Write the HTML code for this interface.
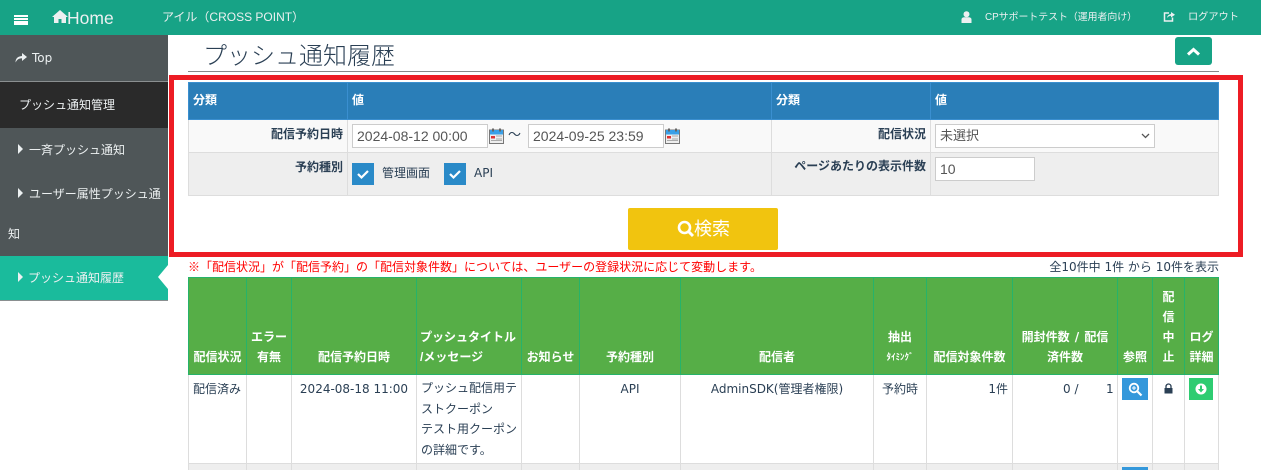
<!DOCTYPE html>
<html lang="ja"><head><meta charset="utf-8"><title>プッシュ通知履歴</title>
<style>
html,body{margin:0;padding:0;background:#fff;width:1261px;height:470px;overflow:hidden}
body{font-family:"Liberation Sans","Noto Sans CJK JP",sans-serif;font-size:12px;color:#2A3F54;position:relative}
.a{position:absolute;white-space:nowrap;line-height:16px}
.b{position:absolute}
.w{color:#fff}
.s{color:#ECF0F1}
.h{color:#fff;font-weight:bold}
.c{text-align:center}
.r{text-align:right}
.d{font-family:"DejaVu Sans","Noto Sans CJK JP",sans-serif}
.inp{position:absolute;box-sizing:border-box;background:#fff;border:1px solid #ccc;color:#555;font-size:14px;line-height:22px;padding-left:4px;height:24px;white-space:nowrap}
.chk{position:absolute;width:22px;height:22px;background:#2a8ac8}
</style></head><body>

<!-- top bar -->
<div class="b" style="left:0;top:0;width:1261px;height:35px;background:#17a386"></div>
<div class="b" style="left:14px;top:15px;width:14px;height:2px;background:#fff;box-shadow:0 3px 0 #fff,0 6px 0 #fff,0 8px 0 #fff"></div>
<svg class="b" style="left:52px;top:10px" width="16" height="13" viewBox="0 0 16 13"><path d="M8 0 L16 7 L14 7 L14 13 L9.500 13 L9.500 9 L6.500 9 L6.500 13 L2 13 L2 7 L0 7 Z" fill="#ecf0f1"/></svg>
<div class="a s" style="left:67px;top:7px;font-size:17.500px;line-height:22px">Home</div>
<div class="a s" style="left:162px;top:9px;font-size:12px">アイル（CROSS POINT）</div>
<svg class="b" style="left:961px;top:11px" width="11" height="12" viewBox="0 0 11 12"><circle cx="5.500" cy="3.200" r="3" fill="#ecf0f1"/><path d="M0.500 12 V8.500 Q0.500 6.500 3 6.200 H8 Q10.500 6.500 10.500 8.500 V12 Z" fill="#ecf0f1"/></svg>
<div class="a s" style="left:985px;top:10px;font-size:9.900px">CPサポートテスト（運用者向け）</div>
<svg class="b" style="left:1163px;top:11px" width="12" height="11" viewBox="0 0 12 11"><path d="M6 2 H1.500 V10 H9.500 V6.500" fill="none" stroke="#ecf0f1" stroke-width="1.500"/><path d="M4 7 Q4.500 3.500 8 3 V1 L12 3.800 L8 6.500 V4.800 Q5.500 5 4 7Z" fill="#ecf0f1"/></svg>
<div class="a s" style="left:1188px;top:10px;font-size:10.200px">ログアウト</div>

<!-- sidebar -->
<div class="b" style="left:0;top:35px;width:168px;height:221px;background:#4f5658"></div>
<div class="b" style="left:0;top:81px;width:168px;height:1px;background:#8a8f90"></div>
<div class="b" style="left:0;top:82px;width:168px;height:46px;background:#2a2a2a"></div>
<div class="b" style="left:0;top:256px;width:168px;height:44px;background:#1abb9c"></div>
<div class="b" style="left:0;top:300px;width:168px;height:1px;background:#8a8f90"></div>
<div class="b" style="left:158px;top:265px;width:0;height:0;border-top:12.500px solid transparent;border-bottom:12.500px solid transparent;border-right:10px solid #fff"></div>
<svg class="b" style="left:15px;top:52px" width="12" height="11" viewBox="0 0 12 11"><path d="M0.500 10.500 Q0.500 4.500 7 4 V1 L12 5 L7 9 V6.300 Q2.500 6.300 0.500 10.500Z" fill="#ecf0f1"/></svg>
<div class="a s d" style="left:32px;top:50px">Top</div>
<div class="a s" style="left:19px;top:97px">プッシュ通知管理</div>
<div class="b" style="left:18px;top:144px;width:0;height:0;border-top:5px solid transparent;border-bottom:5px solid transparent;border-left:5px solid #ecf0f1"></div>
<div class="a s" style="left:29px;top:142px">一斉プッシュ通知</div>
<div class="b" style="left:18px;top:188px;width:0;height:0;border-top:5px solid transparent;border-bottom:5px solid transparent;border-left:5px solid #ecf0f1"></div>
<div class="a s" style="left:29px;top:186px">ユーザー属性プッシュ通</div>
<div class="a s" style="left:8px;top:226px">知</div>
<div class="b" style="left:18px;top:272px;width:0;height:0;border-top:5px solid transparent;border-bottom:5px solid transparent;border-left:5px solid #ecf0f1"></div>
<div class="a s" style="left:28px;top:270px">プッシュ通知履歴</div>

<!-- title -->
<div class="a" style="left:203px;top:42px;font-size:24px;line-height:30px;color:#2A3F54;font-weight:300">プッシュ通知履歴</div>
<div class="b" style="left:188px;top:71px;width:1031px;height:1px;background:#888"></div>
<div class="b" style="left:1175px;top:37px;width:37px;height:28px;background:#17a386;border-radius:3px"></div>
<svg class="b" style="left:1186px;top:47px" width="15" height="9" viewBox="0 0 15 9"><path d="M2 7.500 L7.500 2.500 L13 7.500" fill="none" stroke="#fff" stroke-width="3"/></svg>

<!-- search table -->
<div class="b" style="left:188px;top:82px;width:1031px;height:38px;background:#2a7eb8;border:solid #3a8fd0;border-width:1px 0 1px 0;box-sizing:border-box"></div>
<div class="b" style="left:188px;top:120px;width:1031px;height:33px;background:#f9f9f9"></div>
<div class="b" style="left:188px;top:153px;width:1031px;height:43px;background:#eee"></div>
<div class="b" style="left:188px;top:152px;width:1031px;height:1px;background:#ddd"></div>
<div class="b" style="left:188px;top:195px;width:1031px;height:1px;background:#ddd"></div>
<div class="b" style="left:188px;top:120px;width:1px;height:76px;background:#ddd"></div>
<div class="b" style="left:1218px;top:120px;width:1px;height:76px;background:#ddd"></div>
<div class="b" style="left:188px;top:82px;width:1px;height:38px;background:#3a8fd0"></div>
<div class="b" style="left:1218px;top:82px;width:1px;height:38px;background:#3a8fd0"></div>
<div class="b" style="left:347px;top:82px;width:1px;height:38px;background:#3a8fd0"></div>
<div class="b" style="left:771px;top:82px;width:1px;height:38px;background:#3a8fd0"></div>
<div class="b" style="left:930px;top:82px;width:1px;height:38px;background:#3a8fd0"></div>
<div class="b" style="left:347px;top:120px;width:1px;height:76px;background:#ddd"></div>
<div class="b" style="left:771px;top:120px;width:1px;height:76px;background:#ddd"></div>
<div class="b" style="left:930px;top:120px;width:1px;height:76px;background:#ddd"></div>
<div class="a h" style="left:193px;top:92px">分類</div>
<div class="a h" style="left:352px;top:92px">値</div>
<div class="a h" style="left:776px;top:92px">分類</div>
<div class="a h" style="left:935px;top:92px">値</div>
<div class="a r" style="left:188px;width:155px;top:126px;font-weight:bold">配信予約日時</div>
<div class="a r" style="left:188px;width:155px;top:159px;font-weight:bold">予約種別</div>
<div class="a r" style="left:772px;width:154px;top:126px;font-weight:bold">配信状況</div>
<div class="a r" style="left:772px;width:154px;top:158px;font-weight:bold">ページあたりの表示件数</div>
<div class="inp" style="left:352px;top:124px;width:136px">2024-08-12 00:00</div>
<div class="inp" style="left:528px;top:124px;width:136px">2024-09-25 23:59</div>
<svg class="b" style="left:489px;top:128px" width="15" height="16" viewBox="0 0 15 16"><rect x="0.500" y="2" width="14" height="13.500" fill="#eee" stroke="#777"/><rect x="1" y="2" width="13" height="4.500" fill="#3aa0e8"/><rect x="3" y="0.500" width="2" height="3" fill="#666"/><rect x="10" y="0.500" width="2" height="3" fill="#666"/><rect x="2" y="8" width="4" height="2.500" fill="#d33"/><path d="M7 8h6M7 11h6M2 12.500h11" stroke="#aaa"/></svg>
<div class="a" style="left:508px;top:127px;font-size:13px">〜</div>
<svg class="b" style="left:665px;top:128px" width="15" height="16" viewBox="0 0 15 16"><rect x="0.500" y="2" width="14" height="13.500" fill="#eee" stroke="#777"/><rect x="1" y="2" width="13" height="4.500" fill="#3aa0e8"/><rect x="3" y="0.500" width="2" height="3" fill="#666"/><rect x="10" y="0.500" width="2" height="3" fill="#666"/><rect x="2" y="8" width="4" height="2.500" fill="#d33"/><path d="M7 8h6M7 11h6M2 12.500h11" stroke="#aaa"/></svg>
<div class="inp" style="left:935px;top:124px;width:220px;font-size:13px">未選択</div>
<svg class="b" style="left:1141px;top:133px" width="9" height="6" viewBox="0 0 9 6"><path d="M1 1 L4.500 4.500 L8 1" fill="none" stroke="#555" stroke-width="1.300"/></svg>
<div class="inp" style="left:935px;top:157px;width:100px">10</div>
<div class="chk" style="left:352px;top:163px"></div>
<svg class="b" style="left:352px;top:163px" width="22" height="22" viewBox="0 0 22 22"><path d="M6 11 L9.500 14.500 L16 8" fill="none" stroke="#fff" stroke-width="2.200"/></svg>
<div class="a" style="left:382px;top:165px">管理画面</div>
<div class="chk" style="left:444px;top:163px"></div>
<svg class="b" style="left:444px;top:163px" width="22" height="22" viewBox="0 0 22 22"><path d="M6 11 L9.500 14.500 L16 8" fill="none" stroke="#fff" stroke-width="2.200"/></svg>
<div class="a d" style="left:474px;top:165px">API</div>

<!-- search button -->
<div class="b" style="left:628px;top:208px;width:150px;height:42px;background:#f1c40f;border-radius:2px"></div>
<svg class="b" style="left:677px;top:220px" width="18" height="18" viewBox="0 0 18 18"><circle cx="7.500" cy="7.500" r="5.500" fill="none" stroke="#fff" stroke-width="2.600"/><path d="M11.500 11.500 L16 16" stroke="#fff" stroke-width="3"/></svg>
<div class="a w" style="left:694px;top:218px;font-size:18px;line-height:22px">検索</div>

<!-- red highlight box -->
<div class="b" style="left:169px;top:75px;width:1074px;height:182px;border:5px solid #ed1c24;box-sizing:border-box"></div>

<!-- notes -->
<div class="a" style="left:188px;top:259px;color:#f00">※「配信状況」が「配信予約」の「配信対象件数」については、ユーザーの登録状況に応じて変動します。</div>
<div class="a r d" style="left:919px;width:300px;top:259px">全10件中 1件 から 10件を表示</div>

<!-- results table -->
<div class="b" style="left:188px;top:277px;width:1031px;height:98px;background:#56ae47;border:solid #26b36a;border-width:1px 0 1px 0;box-sizing:border-box"></div>
<div class="b" style="left:188px;top:464px;width:1031px;height:6px;background:#eee"></div>
<div class="b" style="left:188px;top:463px;width:1031px;height:1px;background:#ddd"></div>
<div class="b" style="left:188px;top:277px;width:1px;height:98px;background:#26b36a"></div>
<div class="b" style="left:246px;top:277px;width:1px;height:98px;background:#26b36a"></div>
<div class="b" style="left:291px;top:277px;width:1px;height:98px;background:#26b36a"></div>
<div class="b" style="left:416px;top:277px;width:1px;height:98px;background:#26b36a"></div>
<div class="b" style="left:521px;top:277px;width:1px;height:98px;background:#26b36a"></div>
<div class="b" style="left:579px;top:277px;width:1px;height:98px;background:#26b36a"></div>
<div class="b" style="left:680px;top:277px;width:1px;height:98px;background:#26b36a"></div>
<div class="b" style="left:873px;top:277px;width:1px;height:98px;background:#26b36a"></div>
<div class="b" style="left:926px;top:277px;width:1px;height:98px;background:#26b36a"></div>
<div class="b" style="left:1012px;top:277px;width:1px;height:98px;background:#26b36a"></div>
<div class="b" style="left:1117px;top:277px;width:1px;height:98px;background:#26b36a"></div>
<div class="b" style="left:1152px;top:277px;width:1px;height:98px;background:#26b36a"></div>
<div class="b" style="left:1184px;top:277px;width:1px;height:98px;background:#26b36a"></div>
<div class="b" style="left:1218px;top:277px;width:1px;height:98px;background:#26b36a"></div>
<div class="b" style="left:188px;top:375px;width:1px;height:95px;background:#ddd"></div>
<div class="b" style="left:246px;top:375px;width:1px;height:95px;background:#ddd"></div>
<div class="b" style="left:291px;top:375px;width:1px;height:95px;background:#ddd"></div>
<div class="b" style="left:416px;top:375px;width:1px;height:95px;background:#ddd"></div>
<div class="b" style="left:521px;top:375px;width:1px;height:95px;background:#ddd"></div>
<div class="b" style="left:579px;top:375px;width:1px;height:95px;background:#ddd"></div>
<div class="b" style="left:680px;top:375px;width:1px;height:95px;background:#ddd"></div>
<div class="b" style="left:873px;top:375px;width:1px;height:95px;background:#ddd"></div>
<div class="b" style="left:926px;top:375px;width:1px;height:95px;background:#ddd"></div>
<div class="b" style="left:1012px;top:375px;width:1px;height:95px;background:#ddd"></div>
<div class="b" style="left:1117px;top:375px;width:1px;height:95px;background:#ddd"></div>
<div class="b" style="left:1152px;top:375px;width:1px;height:95px;background:#ddd"></div>
<div class="b" style="left:1184px;top:375px;width:1px;height:95px;background:#ddd"></div>
<div class="b" style="left:1218px;top:375px;width:1px;height:95px;background:#ddd"></div>

<div class="a h c" style="left:189px;width:57px;top:349px">配信状況</div>
<div class="a h c" style="left:247px;width:44px;top:329px">エラー</div>
<div class="a h c" style="left:247px;width:44px;top:349px">有無</div>
<div class="a h c" style="left:292px;width:124px;top:349px">配信予約日時</div>
<div class="a h" style="left:420px;top:329px">プッシュタイトル</div>
<div class="a h" style="left:420px;top:349px">/メッセージ</div>
<div class="a h c" style="left:522px;width:57px;top:349px">お知らせ</div>
<div class="a h c" style="left:580px;width:100px;top:349px">予約種別</div>
<div class="a h c" style="left:681px;width:192px;top:349px">配信者</div>
<div class="a h c" style="left:874px;width:52px;top:329px">抽出</div>
<div class="a h c" style="left:874px;width:52px;top:349px;font-size:9px">ﾀｲﾐﾝｸﾞ</div>
<div class="a h c" style="left:927px;width:85px;top:349px">配信対象件数</div>
<div class="a h c d" style="left:1013px;width:104px;top:329px;word-spacing:1px">開封件数 / 配信</div>
<div class="a h c" style="left:1013px;width:104px;top:349px">済件数</div>
<div class="a h c" style="left:1118px;width:34px;top:349px">参照</div>
<div class="a h c" style="left:1153px;width:31px;top:289px">配</div>
<div class="a h c" style="left:1153px;width:31px;top:309px">信</div>
<div class="a h c" style="left:1153px;width:31px;top:329px">中</div>
<div class="a h c" style="left:1153px;width:31px;top:349px">止</div>
<div class="a h c" style="left:1185px;width:33px;top:329px">ログ</div>
<div class="a h c" style="left:1185px;width:33px;top:349px">詳細</div>

<div class="a" style="left:193px;top:381px">配信済み</div>
<div class="a c d" style="left:292px;width:124px;top:381px">2024-08-18 11:00</div>
<div class="a" style="left:421px;top:378px;line-height:20.500px">プッシュ配信用テ<br>ストクーポン<br>テスト用クーポン<br>の詳細です。</div>
<div class="a c d" style="left:580px;width:74px;top:381px;margin-left:13px">API</div>
<div class="a c d" style="left:681px;width:192px;top:381px">AdminSDK(管理者権限)</div>
<div class="a c" style="left:874px;width:52px;top:381px">予約時</div>
<div class="a r d" style="left:927px;width:81px;top:381px">1件</div>
<div class="a d" style="left:1063px;top:381px">0 /</div>
<div class="a d" style="left:1106px;top:381px">1</div>

<div class="b" style="left:1122px;top:378px;width:26px;height:22px;background:#3498db"></div>
<svg class="b" style="left:1128px;top:382px" width="15" height="15" viewBox="0 0 15 15"><circle cx="6" cy="6" r="4.300" fill="none" stroke="#fff" stroke-width="1.800"/><path d="M6 4v4M4 6h4" stroke="#fff"/><path d="M9.500 9.500 L13.500 13.500" stroke="#fff" stroke-width="2.200"/></svg>
<svg class="b" style="left:1164px;top:383px" width="9" height="11" viewBox="0 0 9 11"><path d="M2 5 V3.500 a2.500 2.500 0 0 1 5 0 V5" fill="none" stroke="#2A3F54" stroke-width="1.300"/><rect x="0.500" y="5" width="8" height="5.500" fill="#2A3F54"/></svg>
<div class="b" style="left:1189px;top:378px;width:24px;height:22px;background:#2ecc71"></div>
<svg class="b" style="left:1195px;top:383px" width="12" height="12" viewBox="0 0 12 12"><circle cx="6" cy="6" r="5.500" fill="#fff"/><path d="M6 2.500 V7" stroke="#2ecc71" stroke-width="2"/><path d="M3 6 L6 9.500 L9 6Z" fill="#2ecc71"/></svg>
<div class="b" style="left:1122px;top:467px;width:26px;height:3px;background:#3498db"></div>
</body></html>
